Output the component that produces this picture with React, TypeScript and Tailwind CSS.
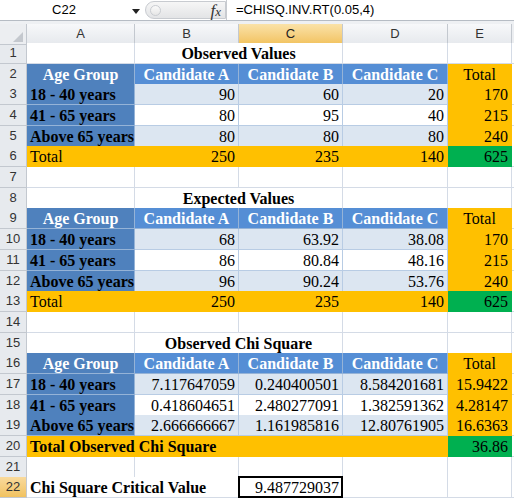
import React from "react";

type Kind = "blank" | "dark" | "head" | "light" | "white" | "orange" | "green";

const kindCls: Record<Kind, string> = {
  blank: "bg-white border-[#d4dbe6]",
  dark: "bg-[#4f81bd] border-[#95b3d7]",
  head: "bg-[#558ed5] border-[#95b3d7]",
  light: "bg-[#dce6f1] border-[#b8cce4]",
  white: "bg-white border-[#b8cce4]",
  orange: "bg-[#ffc000] border-[#ffc000]",
  green: "bg-[#00b050] border-[#00b050]",
};

type CellProps = {
  k?: Kind;
  span?: string;
  align?: "l" | "r" | "c";
  bold?: boolean;
  light?: boolean;
  sel?: boolean;
  children?: React.ReactNode;
};

function Cell({ k = "blank", span = "", align = "r", bold, light, sel, children }: CellProps) {
  const al = align === "l" ? "justify-start" : align === "c" ? "justify-center" : "justify-end";
  return (
    <div
      className={`relative flex items-end px-[3px] pb-[1px] border-r border-b whitespace-nowrap text-[16px] leading-none font-['Liberation_Serif',serif] ${al} ${kindCls[k]} ${span} ${bold ? "font-bold" : ""} ${light ? "text-white" : "text-black"}`}
    >
      {children}
      {sel && <div className="absolute -left-[1px] -top-[1px] -right-[1px] -bottom-[1px] border-2 border-black pointer-events-none" />}
    </div>
  );
}

function Row({ n, h, sel, children }: { n: number; h: string; sel?: boolean; children?: React.ReactNode }) {
  return (
    <div className={`grid grid-cols-[27px_108px_104px_104px_105px_64px_1fr] ${h}`}>
      <div
        className={`flex items-center justify-center border-r border-b border-[#c3c8cf] text-[13px] text-[#333] font-['Liberation_Sans',sans-serif] ${sel ? "bg-gradient-to-b from-[#f9da9c] to-[#f1c25f]" : "bg-[#e7eaee]"}`}
      >
        {n}
      </div>
      {children}
      <div className="border-b border-[#d4dbe6] bg-white" />
    </div>
  );
}

const H20 = "h-[20px]";
const H21 = "h-[21px]";

function Header({ n, h }: { n: number; h: string }) {
  return (
    <Row n={n} h={h}>
      <Cell k="dark" align="c" bold light>Age Group</Cell>
      <Cell k="head" align="c" bold light>Candidate A</Cell>
      <Cell k="head" align="c" bold light>Candidate B</Cell>
      <Cell k="head" align="c" bold light>Candidate C</Cell>
      <Cell k="orange" align="c">Total</Cell>
    </Row>
  );
}

const groups = ["18 - 40 years", "41 - 65 years", "Above 65 years"];

function DataRows({ start, hs, d }: { start: number; hs: string[]; d: string[][] }) {
  return (
    <>
      {d.map((r, i) => {
        const k: Kind = i === 1 ? "white" : "light";
        return (
          <Row key={i} n={start + i} h={hs[i]}>
            <Cell k="dark" align="l" bold>{groups[i]}</Cell>
            <Cell k={k}>{r[0]}</Cell>
            <Cell k={k}>{r[1]}</Cell>
            <Cell k={k}>{r[2]}</Cell>
            <Cell k="orange">{r[3]}</Cell>
          </Row>
        );
      })}
    </>
  );
}

function Blank({ n, h }: { n: number; h: string }) {
  return (
    <Row n={n} h={h}>
      <Cell />
      <Cell />
      <Cell />
      <Cell />
      <Cell />
    </Row>
  );
}

function Title({ n, h, t }: { n: number; h: string; t: string }) {
  return (
    <Row n={n} h={h}>
      <Cell />
      <Cell span="col-span-2" align="c" bold>{t}</Cell>
      <Cell />
      <Cell />
    </Row>
  );
}

function ColHead({ label, sel }: { label: string; sel?: boolean }) {
  return (
    <div
      className={`flex items-center justify-center border-r border-b border-[#c3c8cf] text-[13px] font-['Liberation_Sans',sans-serif] ${sel ? "bg-gradient-to-b from-[#fae2a8] to-[#f2c35f] text-[#222]" : "bg-gradient-to-b from-[#f7f8fa] to-[#e6e9ed] text-[#333]"}`}
    >
      {label}
    </div>
  );
}

export default function App() {
  return (
    <div className="w-[514px] h-[498px] overflow-hidden bg-white select-none">
      {/* formula bar */}
      <div className="flex h-[20px] items-stretch bg-white">
        <div className="relative w-[145px] flex items-center">
          <span className="w-[128px] text-center text-[13px] text-black font-['Liberation_Sans',sans-serif]">C22</span>
          <svg width="8" height="5" viewBox="0 0 8 5" className="absolute left-[132px] top-[9px]">
            <path d="M0 0 L8 0 L4 5 Z" fill="#222" />
          </svg>
        </div>
        <div className="relative w-[81px] my-[1px] rounded-l-full border border-[#c8cbd0] bg-gradient-to-b from-[#f6f6f6] to-[#e3e4e6] flex items-center">
          <div className="ml-[4px] w-[11px] h-[11px] rounded-full border border-[#c9ccd1] bg-gradient-to-b from-[#fafafa] to-[#e6e6e6]" />
          <span className="ml-auto mr-[4px] text-[17px] leading-none italic font-['Liberation_Serif',serif] text-[#333]">
            f<span className="text-[13px]">x</span>
          </span>
        </div>
        <div className="flex-1 flex items-center pl-[9px] border-l border-[#c8cbd0] text-[13px] text-black font-['Liberation_Sans',sans-serif]">
          =CHISQ.INV.RT(0.05,4)
        </div>
      </div>
      <div className="h-[4px] border-t border-[#b6bcc4] bg-[#eef0f3]" />
      {/* column headers */}
      <div className="grid grid-cols-[27px_108px_104px_104px_105px_64px_1fr] h-[19px]">
        <div className="relative border-r border-b border-[#c3c8cf] bg-[#eceef1]">
          <svg width="10" height="10" viewBox="0 0 10 10" className="absolute right-[3px] bottom-[2px]">
            <path d="M10 0 L10 10 L0 10 Z" fill="#c4c8ce" />
          </svg>
        </div>
        <ColHead label="A" />
        <ColHead label="B" />
        <ColHead label="C" sel />
        <ColHead label="D" />
        <ColHead label="E" />
        <div className="border-b border-[#c3c8cf] bg-[#eceef1]" />
      </div>

      <Title n={1} h={H21} t="Observed Values" />
      <Header n={2} h={H20} />
      <DataRows
        start={3}
        hs={[H21, H21, H20]}
        d={[
          ["90", "60", "20", "170"],
          ["80", "95", "40", "215"],
          ["80", "80", "80", "240"],
        ]}
      />
      <Row n={6} h={H21}>
        <Cell k="orange" align="l">Total</Cell>
        <Cell k="orange">250</Cell>
        <Cell k="orange">235</Cell>
        <Cell k="orange">140</Cell>
        <Cell k="green">625</Cell>
      </Row>
      <Blank n={7} h={H21} />
      <Title n={8} h={H20} t="Expected Values" />
      <Header n={9} h={H21} />
      <DataRows
        start={10}
        hs={[H21, H21, H20]}
        d={[
          ["68", "63.92", "38.08", "170"],
          ["86", "80.84", "48.16", "215"],
          ["96", "90.24", "53.76", "240"],
        ]}
      />
      <Row n={13} h={H21}>
        <Cell k="orange" align="l">Total</Cell>
        <Cell k="orange">250</Cell>
        <Cell k="orange">235</Cell>
        <Cell k="orange">140</Cell>
        <Cell k="green">625</Cell>
      </Row>
      <Blank n={14} h={H21} />
      <Title n={15} h={H20} t="Observed Chi Square" />
      <Header n={16} h={H21} />
      <DataRows
        start={17}
        hs={[H21, H20, H21]}
        d={[
          ["7.117647059", "0.240400501", "8.584201681", "15.9422"],
          ["0.418604651", "2.480277091", "1.382591362", "4.28147"],
          ["2.666666667", "1.161985816", "12.80761905", "16.6363"],
        ]}
      />
      <Row n={20} h={H21}>
        <Cell k="orange" span="col-span-4" align="l" bold>Total Observed Chi Square</Cell>
        <Cell k="green">36.86</Cell>
      </Row>
      <Blank n={21} h={H20} />
      <Row n={22} h={H21} sel>
        <Cell span="col-span-2" align="l" bold>Chi Square Critical Value</Cell>
        <Cell sel>9.487729037</Cell>
        <Cell />
        <Cell />
      </Row>
    </div>
  );
}
